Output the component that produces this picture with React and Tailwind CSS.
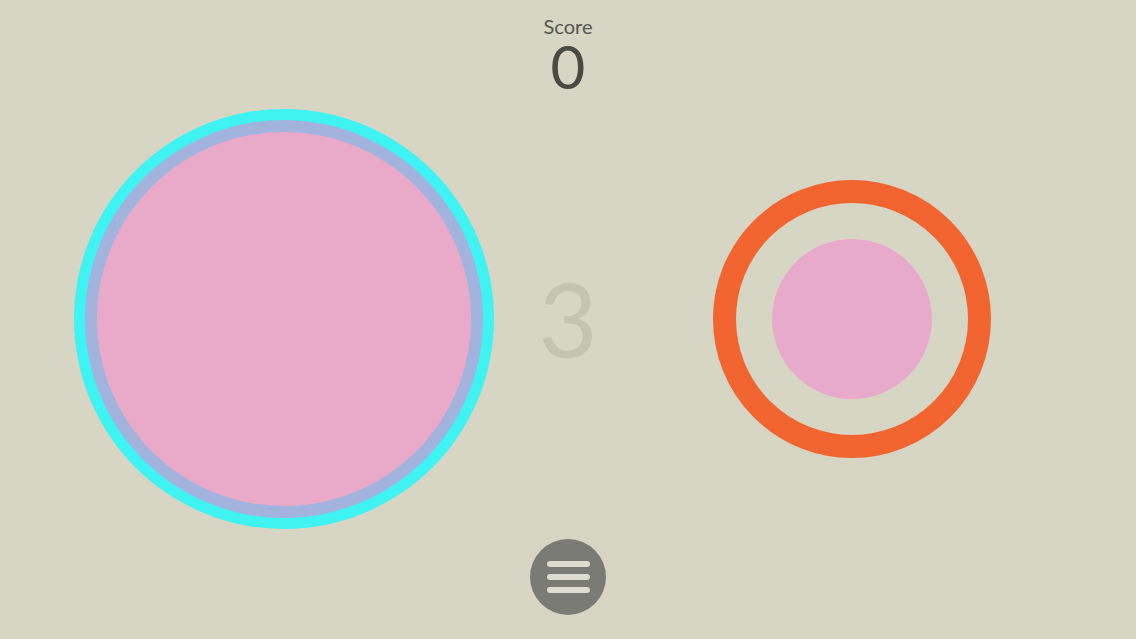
import React from 'react';

export default function App() {
  const score = 0;
  const countdown = 3;

  return (
    <div className="w-[1136px] h-[639px] overflow-hidden bg-[#d7d6c4] flex flex-col items-center font-['Lato',sans-serif]">
      {/* Score header */}
      <div className="mt-[16px] flex flex-col items-center">
        <span className="text-[20px] leading-[20px] text-[#55554f]">Score</span>
        <span className="text-[60px] leading-[60px] text-[#4a4a44]">{score}</span>
      </div>

      {/* Play field */}
      <div className="mt-[13px] w-full flex items-center pl-[74px]">
        <div className="w-[420px] h-[420px] rounded-full bg-[#3ff3f3] p-[11px]">
          <div className="w-full h-full rounded-full bg-[#a2b3de] p-[12px]">
            <div className="w-full h-full rounded-full bg-[#e9a9c9]" />
          </div>
        </div>

        <div className="ml-[24px] w-[100px] flex justify-center">
          <span className="text-[102px] leading-none text-[#c5c4b3]">{countdown}</span>
        </div>

        <div className="ml-[95px] w-[278px] h-[278px] rounded-full border-[23px] border-[#f26430] flex items-center justify-center">
          <div className="w-[160px] h-[160px] rounded-full bg-[#e8aacb]" />
        </div>
      </div>

      {/* Menu button */}
      <button className="mt-[10px] w-[76px] h-[76px] rounded-full bg-[#7b7b75] flex flex-col items-center justify-center gap-[7px]">
        <span className="block w-[43px] h-[6px] rounded-full bg-[#dddcd1]" />
        <span className="block w-[43px] h-[6px] rounded-full bg-[#dddcd1]" />
        <span className="block w-[43px] h-[6px] rounded-full bg-[#dddcd1]" />
      </button>
    </div>
  );
}
